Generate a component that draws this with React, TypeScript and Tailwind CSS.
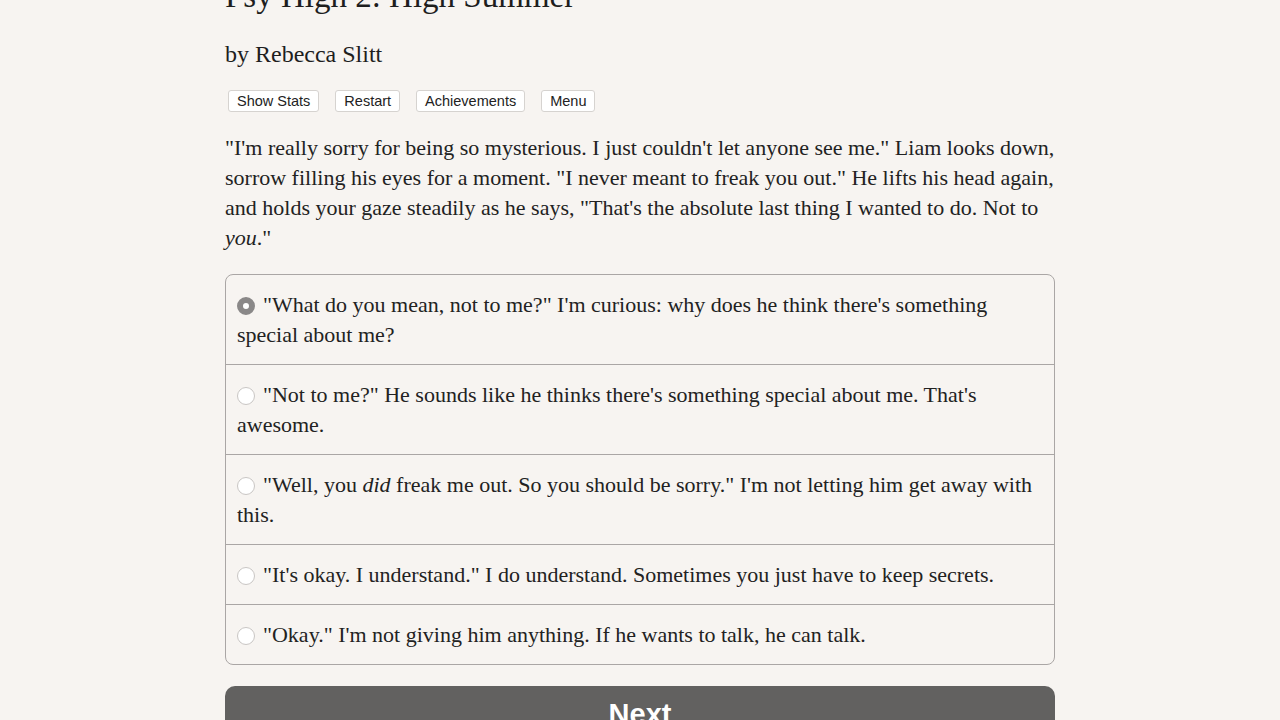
const serif = { fontFamily: '"Liberation Serif", "DejaVu Serif", serif' };
const sans = { fontFamily: '"Liberation Sans", Arial, sans-serif' };

const CHOICES: { id: number; body: React.ReactNode }[] = [
  {
    id: 0,
    body: (
      <>"What do you mean, not to me?" I'm curious: why does he think there's something special about me?</>
    ),
  },
  {
    id: 1,
    body: <>"Not to me?" He sounds like he thinks there's something special about me. That's awesome.</>,
  },
  {
    id: 2,
    body: (
      <>
        "Well, you <i>did</i> freak me out. So you should be sorry." I'm not letting him get away with this.
      </>
    ),
  },
  { id: 3, body: <>"It's okay. I understand." I do understand. Sometimes you just have to keep secrets.</> },
  { id: 4, body: <>"Okay." I'm not giving him anything. If he wants to talk, he can talk.</> },
];

const BUTTONS = ['Show Stats', 'Restart', 'Achievements', 'Menu'];

function Radio({ checked }: { checked: boolean }) {
  return (
    <span
      className={`inline-block w-[18px] h-[18px] rounded-full bg-white align-[-3px] mr-[8px] ${
        checked ? 'border-[6px] border-[#8a8888]' : 'border border-[#c9c6c4]'
      }`}
    />
  );
}

export default function App() {
  return (
    <div className="min-h-screen bg-[#f7f4f1] text-[#222] overflow-hidden" style={serif}>
      <div className="w-[830px] mx-auto">
        <h1 className="text-[33px] leading-[40px] -mt-[24px] text-[#1e1e1e]">Psy High 2: High Summer</h1>
        <h2 className="text-[24px] leading-[30px] mt-[23px] text-[#1e1e1e]">by Rebecca Slitt</h2>

        <div className="flex gap-[16px] mt-[21px] ml-[3px]">
          {BUTTONS.map((b) => (
            <button
              key={b}
              className="h-[22px] px-[8px] text-[14.5px] leading-none bg-white border border-[#d6d3d0] rounded-[3px] text-[#222]"
              style={sans}
            >
              {b}
            </button>
          ))}
        </div>

        <p className="text-[22px] leading-[30px] mt-[21px]">
          "I'm really sorry for being so mysterious. I just couldn't let anyone see me." Liam looks down, sorrow
          filling his eyes for a moment. "I never meant to freak you out." He lifts his head again, and holds your
          gaze steadily as he says, "That's the absolute last thing I wanted to do. Not to <i>you</i>."
        </p>

        <div className="mt-[21px] border border-[#aaa6a5] rounded-[8px]">
          {CHOICES.map((c, i) => (
            <div
              key={c.id}
              className={`pl-[11px] pr-[12px] py-[14.5px] text-[22px] leading-[30px] ${
                i > 0 ? 'border-t border-[#aaa6a5]' : ''
              }`}
            >
              <Radio checked={i === 0} />
              {c.body}
            </div>
          ))}
        </div>

        <button
          className="mt-[21px] w-full h-[60px] rounded-[10px] bg-[#626160] text-white text-[29px] font-bold pt-[7px] flex justify-center items-start"
          style={sans}
        >
          Next
        </button>
      </div>
    </div>
  );
}
